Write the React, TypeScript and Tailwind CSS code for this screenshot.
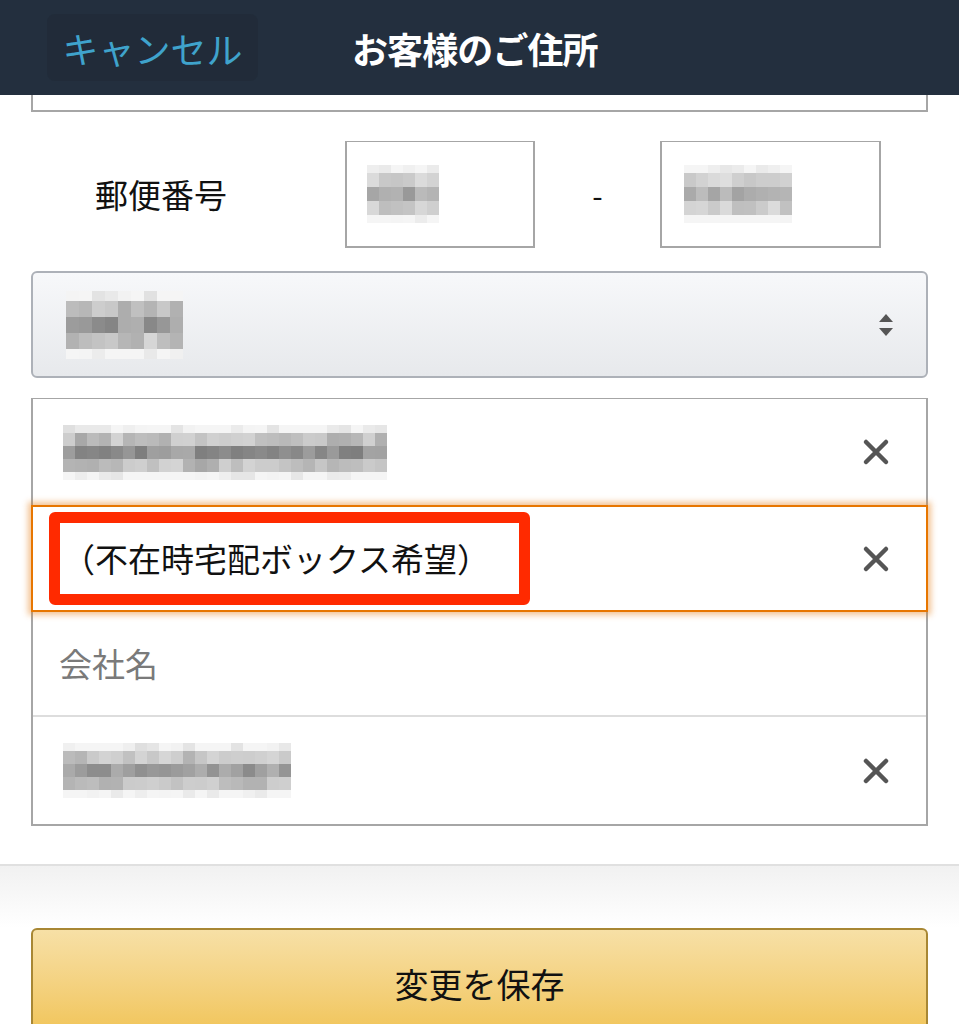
const jp = "font-['Noto_Sans_CJK_JP','Noto_Sans',sans-serif]";

function rand(seed: number) {
  let s = seed;
  return () => {
    s = (s * 9301 + 49297) % 233280;
    return s / 233280;
  };
}

function Mosaic({ cols, cell, rowH, seed, dark = 140 }: { cols: number; cell: number; rowH: number; seed: number; dark?: number }) {
  const r = rand(seed);
  const rows = [0.82, 0.42, 0.12, 0.42, 0.88];
  return (
    <div className="flex flex-col">
      {rows.map((w, i) => (
        <div key={i} className="flex">
          {Array.from({ length: cols }).map((_, j) => {
            const v = Math.round(dark + (245 - dark) * Math.min(1, w + r() * 0.35));
            const h = i === 0 || i === 4 ? Math.round(rowH * 0.6) : rowH;
            return <div key={j} style={{ width: cell, height: h, background: `rgb(${v},${v},${v})` }} />;
          })}
        </div>
      ))}
    </div>
  );
}

function ClearIcon() {
  return (
    <svg width="28" height="28" viewBox="0 0 28 28" className="shrink-0">
      <path d="M4 4L24 24M24 4L4 24" stroke="#555" strokeWidth="4.5" strokeLinecap="round" />
    </svg>
  );
}

export default function App() {
  return (
    <div className={`h-[1024px] w-[959px] overflow-hidden bg-white ${jp}`}>
      <header className="flex h-[95px] items-center bg-[#232f3e]">
        <button className="ml-[47px] flex h-[67px] w-[211px] items-center justify-center rounded-lg bg-[#1f2937]/60 text-[36px] text-[#3fa3cc]">
          キャンセル
        </button>
        <h1 className="ml-[94px] text-[36px] font-bold tracking-tight text-white">お客様のご住所</h1>
      </header>

      <div className="mx-[31px] h-[17px] border-x-2 border-b-2 border-[#a6a6a6]" />

      <div className="mt-[29px] flex h-[107px] items-center">
        <div className="ml-[95px] w-[250px] text-[33px] text-[#111]">郵便番号</div>
        <div className="flex h-[107px] w-[190px] items-center border-2 border-t border-[#a6a6a6] pl-[20px]">
          <Mosaic cols={6} cell={12} rowH={14} seed={3} dark={140} />
        </div>
        <div className="w-[125px] text-center text-[30px] text-[#111]">-</div>
        <div className="flex h-[107px] w-[221px] items-center border-2 border-t border-[#a6a6a6] pl-[22px]">
          <Mosaic cols={9} cell={12} rowH={14} seed={11} dark={150} />
        </div>
      </div>

      <div className="mx-[31px] mt-[23px] flex h-[107px] items-center justify-between rounded-md border-2 border-[#adb1b8] bg-gradient-to-b from-[#f7f8fa] to-[#e7e9ec] pl-[33px] pr-[33px]">
        <Mosaic cols={9} cell={13} rowH={16} seed={7} dark={115} />
        <div className="flex flex-col items-center gap-[6px]">
          <div className="h-0 w-0 border-x-[7px] border-b-[8px] border-x-transparent border-b-[#555]" />
          <div className="h-0 w-0 border-x-[7px] border-t-[8px] border-x-transparent border-t-[#555]" />
        </div>
      </div>

      <div className="mx-[31px] mt-[20px] border-x-2 border-b-2 border-t border-[#a6a6a6]">
        <div className="flex h-[106px] items-center justify-between pl-[30px] pr-[36px]">
          <Mosaic cols={27} cell={12} rowH={13} seed={21} dark={110} />
          <ClearIcon />
        </div>
        <div className="relative -mx-[2px] flex h-[107px] items-center justify-between border-2 border-[#e77600] pr-[36px] shadow-[0_0_6px_3px_rgba(228,121,17,0.45)]">
          <div className="ml-[16px] flex h-[93px] w-[481px] items-center rounded-md border-[11px] border-[#ff2a00] pl-[2px]">
            <span className="text-[33px] text-[#111]">（不在時宅配ボックス希望）</span>
          </div>
          <ClearIcon />
        </div>
        <div className="flex h-[105px] items-center border-b-2 border-[#ddd] pl-[26px] text-[33px] text-[#7a7a7a]">会社名</div>
        <div className="flex h-[107px] items-center justify-between pl-[30px] pr-[36px]">
          <Mosaic cols={19} cell={12} rowH={13} seed={5} dark={120} />
          <ClearIcon />
        </div>
      </div>

      <div className="mt-[38px] h-[64px] border-t-2 border-[#e0e0e0] bg-gradient-to-b from-[#f1f1f1] to-white" />

      <button className="mx-[31px] flex h-[120px] w-[897px] justify-center rounded-t-md border-2 border-[#a88734] bg-gradient-to-b from-[#f7e0a6] to-[#f0c14b] pt-[28px] text-[34px] text-[#111]">
        変更を保存
      </button>
    </div>
  );
}
